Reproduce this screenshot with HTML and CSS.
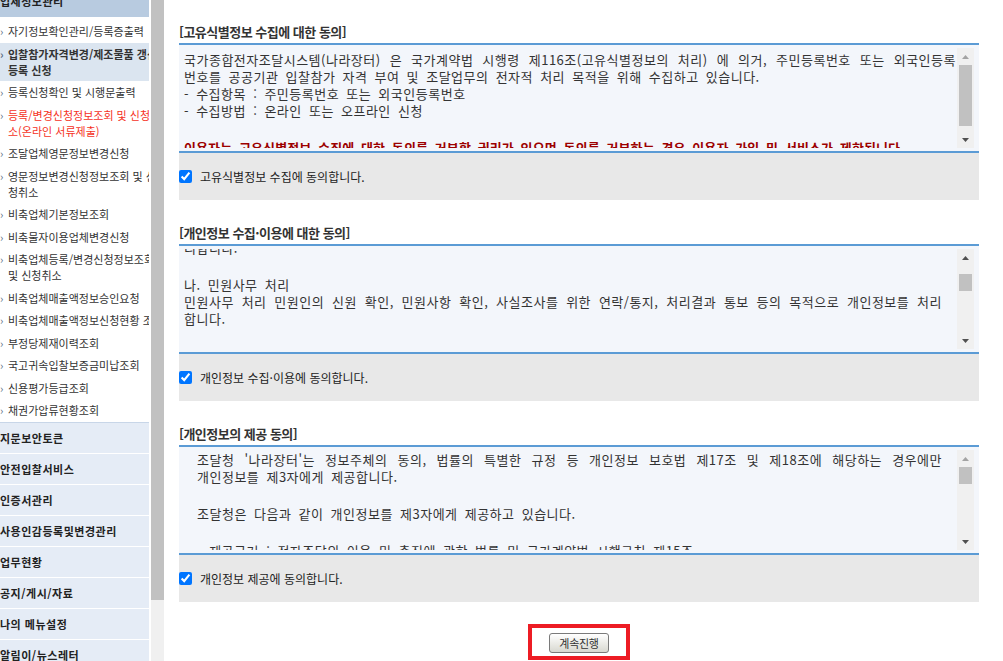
FILE: index.html
```html
<!DOCTYPE html>
<html lang="ko">
<head>
    <meta charset="UTF-8">
    <meta name="viewport" content="width=device-width, initial-scale=1.0">
    <title>업체정보관리 - 동의</title>
    <link rel="stylesheet" href="styles.css">
</head>
<body>
    <div class="container">
        <div class="sidebar">
            <div class="menu-title">업체정보관리</div>
            <ul class="sub-menu">
                <li>자기정보확인관리/등록증출력</li>
                <li class="active">입찰참가자격변경/제조물품 갱신<br>등록 신청</li>
                <li>등록신청확인 및 시행문출력</li>
                <li class="current">등록/변경신청정보조회 및 신청취<br>소(온라인 서류제출)</li>
                <li>조달업체영문정보변경신청</li>
                <li>영문정보변경신청정보조회 및 신<br>청취소</li>
                <li>비축업체기본정보조회</li>
                <li>비축물자이용업체변경신청</li>
                <li>비축업체등록/변경신청정보조회<br>및 신청취소</li>
                <li>비축업체매출액정보승인요청</li>
                <li>비축업체매출액정보신청현황 조회</li>
                <li>부정당제재이력조회</li>
                <li>국고귀속입찰보증금미납조회</li>
                <li>신용평가등급조회</li>
                <li>채권가압류현황조회</li>
            </ul>
            <ul class="top-menu">
                <li>지문보안토큰</li>
                <li>안전입찰서비스</li>
                <li>인증서관리</li>
                <li>사용인감등록및변경관리</li>
                <li>업무현황</li>
                <li>공지/게시/자료</li>
                <li>나의 메뉴설정</li>
                <li>알림이/뉴스레터</li>
            </ul>
        </div>
        <div class="side-scroll"><div class="side-thumb"></div></div>

        <div class="content">
            <div class="agree-section">
                <h3 class="agree-title">[고유식별정보 수집에 대한 동의]</h3>
                <div class="agree-box">
                    <div class="agree-text text-a">
                        <div class="text-inner">
                            <p class="justify">국가종합전자조달시스템(나라장터) 은 국가계약법 시행령 제116조(고유식별정보의 처리) 에 의거, 주민등록번호 또는 외국인등록</p>
                            <p>번호를 공공기관 입찰참가 자격 부여 및 조달업무의 전자적 처리 목적을 위해 수집하고 있습니다.</p>
                            <p>- 수집항목 : 주민등록번호 또는 외국인등록번호</p>
                            <p>- 수집방법 : 온라인 또는 오프라인 신청</p>
                            <p class="blank"></p>
                            <p class="warn">이용자는 고유식별정보 수집에 대한 동의를 거부할 권리가 있으며 동의를 거부하는 경우 이용자 가입 및 서비스가 제한됩니다.</p>
                        </div>
                    </div>
                    <div class="scrollbar">
                        <div class="arrow off"><svg width="7" height="4" viewBox="0 0 7 4"><path d="M0 4 L3.5 0 L7 4 Z"/></svg></div>
                        <div class="track"><div class="thumb" style="height: 61px; margin-top: 0px;"></div></div>
                        <div class="arrow"><svg width="7" height="4" viewBox="0 0 7 4"><path d="M0 0 L7 0 L3.5 4 Z"/></svg></div>
                    </div>
                </div>
                <label class="agree-check"><input type="checkbox" checked> 고유식별정보 수집에 동의합니다.</label>
            </div>

            <div class="agree-section">
                <h3 class="agree-title">[개인정보 수집·이용에 대한 동의]</h3>
                <div class="agree-box">
                    <div class="agree-text text-b">
                        <div class="text-inner">
                            <p>리합니다.</p>
                            <p class="blank"></p>
                            <p>나. 민원사무 처리</p>
                            <p class="justify">민원사무 처리 민원인의 신원 확인, 민원사항 확인, 사실조사를 위한 연락/통지, 처리결과 통보 등의 목적으로 개인정보를 처리</p>
                            <p>합니다.</p>
                            <p class="blank"></p>
                            <p>다. 조달업무 처리</p>
                        </div>
                    </div>
                    <div class="scrollbar">
                        <div class="arrow"><svg width="7" height="4" viewBox="0 0 7 4"><path d="M0 4 L3.5 0 L7 4 Z"/></svg></div>
                        <div class="track"><div class="thumb" style="height: 17px; margin-top: 8px;"></div></div>
                        <div class="arrow"><svg width="7" height="4" viewBox="0 0 7 4"><path d="M0 0 L7 0 L3.5 4 Z"/></svg></div>
                    </div>
                </div>
                <label class="agree-check"><input type="checkbox" checked> 개인정보 수집·이용에 동의합니다.</label>
            </div>

            <div class="agree-section">
                <h3 class="agree-title">[개인정보의 제공 동의]</h3>
                <div class="agree-box">
                    <div class="agree-text text-c">
                        <div class="text-inner">
                            <p class="justify">조달청 '나라장터'는 정보주체의 동의, 법률의 특별한 규정 등 개인정보 보호법 제17조 및 제18조에 해당하는 경우에만</p>
                            <p>개인정보를 제3자에게 제공합니다.</p>
                            <p class="blank"></p>
                            <p>조달청은 다음과 같이 개인정보를 제3자에게 제공하고 있습니다.</p>
                            <p class="blank"></p>
                            <p>- 제공근거 : 전자조달의 이용 및 촉진에 관한 법률 및 국가계약법 시행규칙 제15조</p>
                        </div>
                    </div>
                    <div class="scrollbar">
                        <div class="arrow off"><svg width="7" height="4" viewBox="0 0 7 4"><path d="M0 4 L3.5 0 L7 4 Z"/></svg></div>
                        <div class="track"><div class="thumb" style="height: 17px; margin-top: 0px;"></div></div>
                        <div class="arrow"><svg width="7" height="4" viewBox="0 0 7 4"><path d="M0 0 L7 0 L3.5 4 Z"/></svg></div>
                    </div>
                </div>
                <label class="agree-check"><input type="checkbox" checked> 개인정보 제공에 동의합니다.</label>
            </div>

            <div class="btn-area">
                <span class="btn-mark"><button class="btn">계속진행</button></span>
            </div>
        </div>
    </div>
</body>
</html>
```

FILE: styles.css
```css
body {
    font-family: "Noto Sans CJK KR", "Noto Sans", sans-serif;
    margin: 0;
    background-color: #fff;
    color: #333;
}

.container {
    display: flex;
    height: 100vh;
    overflow: hidden;
}

/* left menu */
.sidebar {
    width: 149px;
    flex-shrink: 0;
    margin-top: -14px;
    overflow: hidden;
    white-space: nowrap;
}

.menu-title {
    height: 31px;
    line-height: 31px;
    background-color: #b8cbe0;
    font-size: 11px;
    font-weight: bold;
    color: #222;
    letter-spacing: 0.5px;
}

.sub-menu {
    list-style: none;
    margin: 0;
    padding: 3px 0 0 0;
}

.sub-menu li {
    padding: 3px 0 3.5px 8px;
    text-indent: -8px;
    font-size: 11px;
    line-height: 16px;
    color: #333;
}

.sub-menu li::before {
    content: "›";
    display: inline-block;
    width: 8px;
    text-indent: 0;
    color: #5a6b80;
}

.sub-menu li.active {
    background-color: #dbe5f0;
    font-weight: bold;
}

.sub-menu li.current {
    color: #f5321e;
}

.top-menu {
    list-style: none;
    margin: 0;
    padding: 0;
    border-top: 1px solid #c8d6e8;
}

.top-menu li {
    height: 30px;
    line-height: 30px;
    border-bottom: 1px solid #fff;
    background-color: #e5ecf6;
    font-size: 11px;
    font-weight: bold;
    color: #222;
    letter-spacing: 0.5px;
}

.side-scroll {
    width: 13px;
    flex-shrink: 0;
    margin-left: 2px;
    background-color: #f0f0f0;
}

.side-thumb {
    height: 600px;
    background-color: #c1c1c1;
}

/* agreement area */
.content {
    width: 800px;
    padding: 23px 0 0 15px;
}

.agree-section + .agree-section {
    margin-top: 24px;
}

.agree-title {
    margin: 0;
    padding-bottom: 2px;
    font-size: 13px;
    line-height: 18px;
    font-weight: bold;
    color: #333;
    letter-spacing: -0.5px;
}

.agree-box {
    display: flex;
    height: 100px;
    padding: 3px 5px;
    border-top: 2px solid #5b9bd5;
    border-bottom: 2px solid #5b9bd5;
    background-color: #f3f6fb;
}

.agree-text {
    flex: 1;
    overflow: hidden;
    font-size: 13px;
    line-height: 17px;
    letter-spacing: 0.5px;
    word-spacing: 3px;
    color: #333;
}

.agree-text p {
    margin: 0;
    white-space: nowrap;
}

.agree-text p.blank {
    height: 20px;
}

.agree-text p.justify {
    white-space: normal;
    text-align: justify;
    text-align-last: justify;
}

.agree-text p.warn {
    color: #9c0000;
    font-weight: bold;
    letter-spacing: 0.1px;
}

.text-a {
    padding: 0 1px 0 0;
}

.text-a .text-inner {
    margin-top: 2.5px;
}

.text-b {
    padding: 0 15px 0 0;
}

.text-b .text-inner {
    margin-top: -10px;
}

.text-c {
    padding: 0 15px 0 13px;
}

.text-c .text-inner {
    margin-top: 0.5px;
}

/* fake scrollbar */
.scrollbar {
    width: 17px;
    display: flex;
    flex-direction: column;
    background-color: #f0f0f0;
}

.arrow {
    height: 17px;
    display: flex;
    justify-content: center;
    align-items: center;
}

.arrow svg {
    fill: #505050;
}

.arrow.off svg {
    fill: #a3a3a3;
}

.track {
    flex: 1;
    padding: 0 2px;
}

.thumb {
    background-color: #c1c1c1;
}

.agree-check {
    display: flex;
    align-items: center;
    gap: 8px;
    height: 47px;
    background-color: #e8e8e8;
    font-size: 12px;
    color: #222;
}

.agree-check input {
    width: 13px;
    height: 13px;
    margin: 0;
}

/* button */
.btn-area {
    display: flex;
    justify-content: center;
    margin-top: 22px;
}

.btn-mark {
    display: inline-block;
    padding: 5px 17px 3px;
    border: 4px solid #ed1c24;
}

.btn {
    display: block;
    width: 60px;
    height: 20px;
    padding: 0;
    border: 1px solid #7a7a7a;
    border-radius: 3px;
    background: linear-gradient(#ffffff, #d8d8d0);
    font-family: "Noto Sans CJK KR", sans-serif;
    font-size: 11px;
    color: #333;
    letter-spacing: -0.3px;
    cursor: pointer;
}
```
